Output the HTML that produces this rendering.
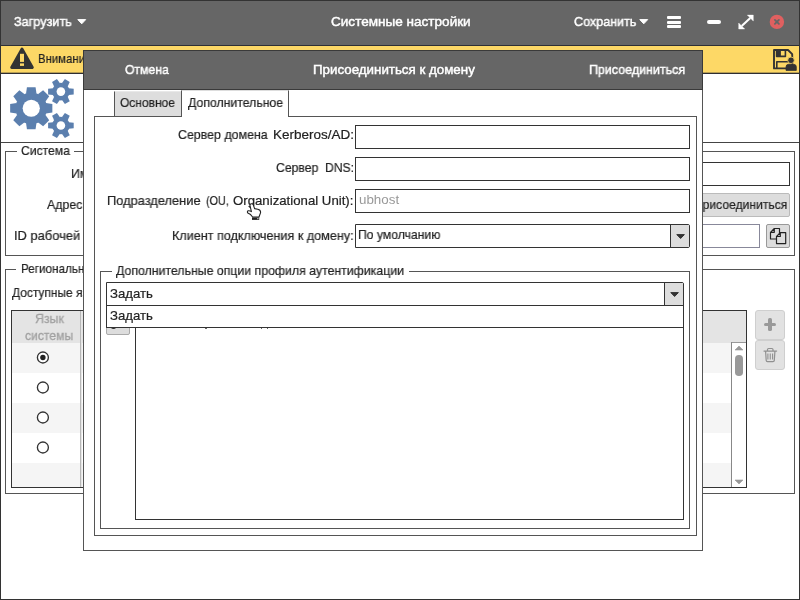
<!DOCTYPE html>
<html>
<head>
<meta charset="utf-8">
<title>Системные настройки</title>
<style>
*{box-sizing:border-box;margin:0;padding:0}
html,body{width:800px;height:600px;overflow:hidden;background:#fff}
body{font-family:"Liberation Sans",sans-serif;font-size:13px;color:#222;position:relative}
.a{position:absolute}
.t{position:absolute;white-space:nowrap;line-height:16px;height:16px;will-change:transform}
</style>
</head>
<body>
<div class="a" style="left:0px;top:0px;width:800px;height:600px;background:#fff;border:1px solid #333;"></div>
<div class="a" style="left:1px;top:1px;width:798px;height:44px;background:#666;"></div>
<div class="a" style="left:1px;top:45px;width:798px;height:1px;background:#2e3036;"></div>
<div class="t" style="left:14.00px;top:14px;font-size:13px;color:#fff;transform:scaleX(0.9737);transform-origin:0 0;-webkit-text-stroke:0.45px #fff;">Загрузить</div>
<svg class="a" style="left:77px;top:19.3px" width="9.5" height="5.5" viewBox="0 0 9.5 5.5"><path d="M0.8 0.6 L8.7 0.6 L4.75 4.8 Z" fill="#fff" stroke="#fff" stroke-width="1" stroke-linejoin="round"/></svg>
<div class="t" style="left:330.80px;top:14px;font-size:13px;color:#fff;transform:scaleX(1.0423);transform-origin:0 0;-webkit-text-stroke:0.45px #fff;">Системные настройки</div>
<div class="t" style="left:573.60px;top:14px;font-size:13px;color:#fff;transform:scaleX(0.9659);transform-origin:0 0;-webkit-text-stroke:0.45px #fff;">Сохранить</div>
<svg class="a" style="left:639.3px;top:19.3px" width="9.5" height="5.5" viewBox="0 0 9.5 5.5"><path d="M0.8 0.6 L8.7 0.6 L4.75 4.8 Z" fill="#fff" stroke="#fff" stroke-width="1" stroke-linejoin="round"/></svg>
<div class="a" style="left:667px;top:16px;width:14px;height:3px;background:#fff;border-radius:1px"></div>
<div class="a" style="left:667px;top:20.5px;width:14px;height:3px;background:#fff;border-radius:1px"></div>
<div class="a" style="left:667px;top:25px;width:14px;height:3px;background:#fff;border-radius:1px"></div>
<div class="a" style="left:707px;top:19.7px;width:13.6px;height:4.1px;background:#fff;border-radius:2px"></div>
<svg class="a" style="left:738px;top:14px" width="16" height="16" viewBox="738 14 16 16"><path d="M747.3 15.1 L753.3 15.1 L753.3 21.1 Z M738.7 23 L738.7 29 L744.7 29 Z" fill="#fff" stroke="#fff" stroke-width="0.4" stroke-linejoin="round"/><path d="M750.3 18.1 L741.7 26" stroke="#fff" stroke-width="2.1"/></svg>
<svg class="a" style="left:769px;top:14px" width="16" height="16" viewBox="769 14 16 16"><circle cx="776.9" cy="21.9" r="7.2" fill="#e06060"/><path d="M774.9 19.9 L778.9 23.9 M778.9 19.9 L774.9 23.9" stroke="#666" stroke-width="1.8" stroke-linecap="round"/></svg>
<div class="a" style="left:1px;top:46px;width:798px;height:27px;background:#fdd866;"></div>
<div class="a" style="left:1px;top:72px;width:798px;height:1px;background:#b89f54;"></div>
<div class="a" style="left:1px;top:73px;width:798px;height:1px;background:#2e2e32;"></div>
<svg class="a" style="left:8px;top:45px" width="28" height="26" viewBox="8 45 28 26"><path d="M22 49 L32.4 67.5 L11.6 67.5 Z" fill="#333" stroke="#333" stroke-width="2.8" stroke-linejoin="round"/><rect x="20" y="53.8" width="4" height="8.1" fill="#fdd866"/><rect x="20" y="63.4" width="4" height="2.5" fill="#fdd866"/></svg>
<div class="t" style="left:37.70px;top:51px;font-size:13px;color:#222;transform:scaleX(0.8760);transform-origin:0 0;-webkit-text-stroke:0.2px #222;">Внимание</div>
<svg class="a" style="left:771px;top:47px" width="28" height="25" viewBox="771 47 28 25"><path d="M774 50 L788 50 L792.2 54.2 L792.2 68.4 L774 68.4 Z" fill="none" stroke="#333" stroke-width="1.9" stroke-linejoin="round"/><path d="M776.6 50 L776.6 56.4 L785.4 56.4 L785.4 50" fill="none" stroke="#333" stroke-width="1.6" stroke-linejoin="round"/><rect x="776.6" y="50" width="4.3" height="6.4" fill="#333"/><path d="M776.8 68.4 L776.8 61.8 L790 61.8" fill="none" stroke="#333" stroke-width="1.6" stroke-linejoin="round"/><circle cx="791" cy="60.3" r="3.3" fill="#333" stroke="#fdd866" stroke-width="0.8"/><path d="M786 70.4 L786 67 Q786 64.3 788.6 64.3 L793.6 64.3 Q796.3 64.3 796.3 67 L796.3 70.4 Z" fill="#333" stroke="#333" stroke-width="0.8" stroke-linejoin="round"/></svg>
<svg class="a" style="left:5px;top:75px" width="75" height="66" viewBox="5 75 75 66"><g fill="#5b7fae"><circle cx="31.25" cy="108.25" r="15.8"/><path transform="rotate(0.0 31.25 108.25)" d="M26.00 93.65 L26.95 87.15 L35.55 87.15 L36.50 93.65 Z"/><path transform="rotate(45.0 31.25 108.25)" d="M26.00 93.65 L26.95 87.15 L35.55 87.15 L36.50 93.65 Z"/><path transform="rotate(90.0 31.25 108.25)" d="M26.00 93.65 L26.95 87.15 L35.55 87.15 L36.50 93.65 Z"/><path transform="rotate(135.0 31.25 108.25)" d="M26.00 93.65 L26.95 87.15 L35.55 87.15 L36.50 93.65 Z"/><path transform="rotate(180.0 31.25 108.25)" d="M26.00 93.65 L26.95 87.15 L35.55 87.15 L36.50 93.65 Z"/><path transform="rotate(225.0 31.25 108.25)" d="M26.00 93.65 L26.95 87.15 L35.55 87.15 L36.50 93.65 Z"/><path transform="rotate(270.0 31.25 108.25)" d="M26.00 93.65 L26.95 87.15 L35.55 87.15 L36.50 93.65 Z"/><path transform="rotate(315.0 31.25 108.25)" d="M26.00 93.65 L26.95 87.15 L35.55 87.15 L36.50 93.65 Z"/><circle cx="31.25" cy="108.25" r="8.6" fill="#fff"/><circle cx="60.9" cy="91.6" r="8.8"/><path transform="rotate(30.0 60.9 91.6)" d="M57.60 84.00 L58.10 78.80 L63.70 78.80 L64.20 84.00 Z"/><path transform="rotate(90.0 60.9 91.6)" d="M57.60 84.00 L58.10 78.80 L63.70 78.80 L64.20 84.00 Z"/><path transform="rotate(150.0 60.9 91.6)" d="M57.60 84.00 L58.10 78.80 L63.70 78.80 L64.20 84.00 Z"/><path transform="rotate(210.0 60.9 91.6)" d="M57.60 84.00 L58.10 78.80 L63.70 78.80 L64.20 84.00 Z"/><path transform="rotate(270.0 60.9 91.6)" d="M57.60 84.00 L58.10 78.80 L63.70 78.80 L64.20 84.00 Z"/><path transform="rotate(330.0 60.9 91.6)" d="M57.60 84.00 L58.10 78.80 L63.70 78.80 L64.20 84.00 Z"/><circle cx="60.9" cy="91.6" r="4.3" fill="#fff"/><circle cx="60.9" cy="125.5" r="8.8"/><path transform="rotate(30.0 60.9 125.5)" d="M57.60 117.90 L58.10 112.70 L63.70 112.70 L64.20 117.90 Z"/><path transform="rotate(90.0 60.9 125.5)" d="M57.60 117.90 L58.10 112.70 L63.70 112.70 L64.20 117.90 Z"/><path transform="rotate(150.0 60.9 125.5)" d="M57.60 117.90 L58.10 112.70 L63.70 112.70 L64.20 117.90 Z"/><path transform="rotate(210.0 60.9 125.5)" d="M57.60 117.90 L58.10 112.70 L63.70 112.70 L64.20 117.90 Z"/><path transform="rotate(270.0 60.9 125.5)" d="M57.60 117.90 L58.10 112.70 L63.70 112.70 L64.20 117.90 Z"/><path transform="rotate(330.0 60.9 125.5)" d="M57.60 117.90 L58.10 112.70 L63.70 112.70 L64.20 117.90 Z"/><circle cx="60.9" cy="125.5" r="4.3" fill="#fff"/></g></svg>
<div class="a" style="left:1px;top:142px;width:798px;height:1px;background:#444;"></div>
<div class="a" style="left:5px;top:151px;width:790px;height:105px;border:1px solid #555;"></div>
<div class="a" style="left:17px;top:150px;width:57px;height:3px;background:#fff"></div>
<div class="t" style="left:20.60px;top:143px;font-size:13px;color:#222;transform:scaleX(0.9321);transform-origin:0 0;-webkit-text-stroke:0.2px #222;">Система</div>
<div class="t" style="left:71.25px;top:166px;font-size:13px;color:#222;transform:scaleX(0.9500);transform-origin:0 0;-webkit-text-stroke:0.2px #222;">Имя</div>
<div class="t" style="left:46.90px;top:197px;font-size:13px;color:#222;transform:scaleX(0.9500);transform-origin:0 0;-webkit-text-stroke:0.2px #222;">Адрес:</div>
<div class="t" style="left:14.40px;top:228px;font-size:13px;color:#222;transform:scaleX(0.9921);transform-origin:0 0;-webkit-text-stroke:0.2px #222;">ID рабочей</div>
<div class="a" style="left:200px;top:162px;width:590px;height:24px;background:#fff;border:1px solid #333;"></div>
<div class="a" style="left:600px;top:193px;width:190px;height:24px;background:#ddd;border:1px solid #bbb;border-radius:2px;"></div>
<div class="t" style="left:693.80px;top:197px;font-size:13px;color:#222;transform:scaleX(0.9300);transform-origin:0 0;-webkit-text-stroke:0.2px #222;">Присоединиться</div>
<div class="a" style="left:200px;top:224px;width:560px;height:24px;background:#fff;border:1px solid #88889a;"></div>
<div class="a" style="left:766px;top:224px;width:24px;height:24px;background:#ddd;border:1px solid #999;border-radius:2px;"></div>
<svg class="a" style="left:768px;top:226px" width="20" height="20" viewBox="768 226 20 20"><path d="M770.5 232.3 L774.3 228.5 L779.5 228.5 L779.5 239 L770.5 239 Z M774.3 228.5 L774.3 232.3 L770.5 232.3" fill="#ddd" stroke="#222" stroke-width="1.2" stroke-linejoin="round"/><path d="M776.5 236.5 L780.3 232.7 L785.7 232.7 L785.7 243.6 L776.5 243.6 Z M780.3 232.7 L780.3 236.5 L776.5 236.5" fill="#ddd" stroke="#222" stroke-width="1.2" stroke-linejoin="round"/></svg>
<div class="a" style="left:5px;top:269px;width:790px;height:225px;border:1px solid #555;"></div>
<div class="a" style="left:16px;top:268px;width:170px;height:3px;background:#fff"></div>
<div class="t" style="left:20.60px;top:261px;font-size:13px;color:#222;transform:scaleX(0.9000);transform-origin:0 0;-webkit-text-stroke:0.2px #222;">Региональные настройки</div>
<div class="t" style="left:11.90px;top:285px;font-size:13px;color:#222;transform:scaleX(0.9187);transform-origin:0 0;-webkit-text-stroke:0.2px #222;">Доступные языки</div>
<div class="a" style="left:11px;top:310px;width:736px;height:178px;background:#fff;border:1px solid #333;"></div>
<div class="a" style="left:12px;top:311px;width:734px;height:32px;background:#e4e4e4;"></div>
<div class="a" style="left:12px;top:343px;width:719px;height:30px;background:#f5f5f5;"></div>
<div class="a" style="left:12px;top:403px;width:719px;height:30px;background:#f5f5f5;"></div>
<div class="a" style="left:12px;top:463px;width:719px;height:24px;background:#f5f5f5;"></div>
<div class="a" style="left:80px;top:311px;width:1px;height:176px;background:#b8b8b8;"></div>
<div class="a" style="left:81px;top:311px;width:1px;height:176px;background:#e6e6e6;"></div>
<div class="t" style="left:35.10px;top:311px;font-size:13px;color:#a0a0a0;transform:scaleX(0.9480);transform-origin:0 0;-webkit-text-stroke:0.3px #a0a0a0;">Язык</div>
<div class="t" style="left:25.40px;top:328px;font-size:13px;color:#a0a0a0;transform:scaleX(0.9344);transform-origin:0 0;-webkit-text-stroke:0.3px #a0a0a0;">системы</div>
<svg class="a" style="left:34px;top:348px" width="18" height="18" viewBox="34 348 18 18"><circle cx="42.9" cy="357.5" r="5.5" fill="#fff" stroke="#333" stroke-width="1.35"/><circle cx="42.9" cy="357.5" r="2.7" fill="#222"/></svg>
<svg class="a" style="left:34px;top:378px" width="18" height="18" viewBox="34 378 18 18"><circle cx="42.9" cy="387.5" r="5.5" fill="#fff" stroke="#333" stroke-width="1.35"/></svg>
<svg class="a" style="left:34px;top:408px" width="18" height="18" viewBox="34 408 18 18"><circle cx="42.9" cy="417.5" r="5.5" fill="#fff" stroke="#333" stroke-width="1.35"/></svg>
<svg class="a" style="left:34px;top:438px" width="18" height="18" viewBox="34 438 18 18"><circle cx="42.9" cy="447.5" r="5.5" fill="#fff" stroke="#333" stroke-width="1.35"/></svg>
<div class="a" style="left:731px;top:343px;width:15px;height:144px;background:#fff;"></div>
<div class="a" style="left:731px;top:342px;width:15px;height:1px;background:#999;"></div>
<div class="a" style="left:731px;top:342px;width:1px;height:145px;background:#888;"></div>
<svg class="a" style="left:734px;top:345px" width="10" height="6" viewBox="0 0 10 6"><path d="M1 5 L5 1 L9 5 Z" fill="#999" stroke="#999" stroke-width="0.6" stroke-linejoin="round"/></svg>
<div class="a" style="left:735.2px;top:355px;width:7.6px;height:21px;background:#999;border-radius:3.8px"></div>
<svg class="a" style="left:734px;top:479px" width="10" height="6" viewBox="0 0 10 6"><path d="M1 1 L5 5 L9 1 Z" fill="#999" stroke="#999" stroke-width="0.6" stroke-linejoin="round"/></svg>
<div class="a" style="left:755px;top:310px;width:30px;height:30px;background:#e2e2e2;border:1px solid #cfcfcf;border-radius:3px;"></div>
<div class="a" style="left:763.8px;top:322.5px;width:12.6px;height:3.8px;background:#999;border-radius:1.6px"></div>
<div class="a" style="left:768.2px;top:318.2px;width:3.8px;height:12.4px;background:#999;border-radius:1.6px"></div>
<div class="a" style="left:755px;top:340px;width:30px;height:30px;background:#e2e2e2;border:1px solid #cfcfcf;border-radius:3px;"></div>
<svg class="a" style="left:762px;top:346px" width="16" height="18" viewBox="762 346 16 18"><path d="M764 351.1 L776.6 351.1 M767.5 350.8 L767.5 349.6 Q767.5 348.5 768.6 348.5 L771.9 348.5 Q773 348.5 773 349.6 L773 350.8 M765.6 351.5 L766.2 360.4 Q766.3 361.6 767.5 361.6 L773 361.6 Q774.2 361.6 774.3 360.4 L774.9 351.5" fill="none" stroke="#909090" stroke-width="1.2" stroke-linecap="round" stroke-linejoin="round"/><path d="M767.9 353.6 L767.9 359.4 M770.25 353.6 L770.25 359.4 M772.6 353.6 L772.6 359.4" fill="none" stroke="#909090" stroke-width="1.1" stroke-linecap="butt"/></svg>
<div class="a" style="left:83px;top:50px;width:620px;height:501px;background:#fff;border:1px solid #555;"></div>
<div class="a" style="left:83px;top:50px;width:620px;height:40px;background:#666;border:1px solid #3a3a3a;"></div>
<div class="t" style="left:125.00px;top:62px;font-size:13px;color:#fff;transform:scaleX(0.9380);transform-origin:0 0;-webkit-text-stroke:0.45px #fff;">Отмена</div>
<div class="t" style="left:313.40px;top:62px;font-size:13px;color:#fff;transform:scaleX(1.0254);transform-origin:0 0;-webkit-text-stroke:0.45px #fff;">Присоединиться к домену</div>
<div class="t" style="left:589.00px;top:62px;font-size:13px;color:#fff;transform:scaleX(0.9580);transform-origin:0 0;-webkit-text-stroke:0.45px #fff;">Присоединиться</div>
<div class="a" style="left:94px;top:116px;width:603px;height:420px;background:#fff;border:1px solid #555;"></div>
<div class="a" style="left:114px;top:91px;width:68px;height:26px;background:#ddd;border:1px solid #555;border-top-color:#e8e8e8;"></div>
<div class="a" style="left:181px;top:90px;width:108px;height:27px;background:#fff;border:1px solid #555;border-top-color:#ddd;border-bottom:none;"></div>
<div class="a" style="left:182px;top:116px;width:106px;height:1px;background:#fff;"></div>
<div class="t" style="left:120.00px;top:95px;font-size:13px;color:#222;transform:scaleX(0.9233);transform-origin:0 0;-webkit-text-stroke:0.2px #222;">Основное</div>
<div class="t" style="left:187.90px;top:95px;font-size:13px;color:#222;transform:scaleX(0.9435);transform-origin:0 0;-webkit-text-stroke:0.2px #222;">Дополнительное</div>
<div class="t" style="left:178.30px;top:127px;font-size:13px;color:#222;transform:scaleX(0.9535);transform-origin:0 0;-webkit-text-stroke:0.2px #222;">Сервер домена</div>
<div class="t" style="left:272.60px;top:127px;font-size:13px;color:#222;transform:scaleX(1.0380);transform-origin:0 0;-webkit-text-stroke:0.2px #222;">Kerberos/AD:</div>
<div class="a" style="left:355px;top:125px;width:335px;height:24px;background:#fff;border:1px solid #333;"></div>
<div class="t" style="left:276.40px;top:160px;font-size:13px;color:#222;transform:scaleX(0.9408);transform-origin:0 0;-webkit-text-stroke:0.2px #222;">Сервер</div>
<div class="t" style="left:324.60px;top:160px;font-size:13px;color:#222;transform:scaleX(0.9337);transform-origin:0 0;-webkit-text-stroke:0.2px #222;">DNS:</div>
<div class="a" style="left:355px;top:157px;width:335px;height:24px;background:#fff;border:1px solid #333;"></div>
<div class="t" style="left:107.00px;top:193px;font-size:13px;color:#222;transform:scaleX(0.9880);transform-origin:0 0;-webkit-text-stroke:0.2px #222;">Подразделение</div>
<div class="t" style="left:205.60px;top:193px;font-size:13px;color:#222;transform:scaleX(0.8308);transform-origin:0 0;-webkit-text-stroke:0.2px #222;">(OU,</div>
<div class="t" style="left:233.20px;top:193px;font-size:13px;color:#222;transform:scaleX(1.0161);transform-origin:0 0;-webkit-text-stroke:0.2px #222;">Organizational Unit):</div>
<div class="a" style="left:355px;top:189px;width:335px;height:24px;background:#fff;border:1px solid #333;"></div>
<div class="t" style="left:359.20px;top:192px;font-size:13px;color:#999;transform:scaleX(1.0274);transform-origin:0 0;">ubhost</div>
<div class="t" style="left:172.00px;top:228px;font-size:13px;color:#222;transform:scaleX(0.9684);transform-origin:0 0;-webkit-text-stroke:0.2px #222;">Клиент подключения к домену:</div>
<div class="a" style="left:355px;top:224px;width:335px;height:24px;background:#fff;border:1px solid #333;border-radius:0 2px 2px 0;"></div>
<div class="a" style="left:670px;top:225px;width:19px;height:22px;background:#ddd;border-left:1px solid #333;"></div>
<svg class="a" style="left:676px;top:234px" width="9.200000000000045" height="5.199999999999989" viewBox="0 0 9.200000000000045 5.199999999999989"><path d="M0.8 0.6 L8.400000000000045 0.6 L4.600000000000023 4.4999999999999885 Z" fill="#333" stroke="#333" stroke-width="1" stroke-linejoin="round"/></svg>
<div class="t" style="left:358.30px;top:227px;font-size:13px;color:#222;transform:scaleX(0.9361);transform-origin:0 0;-webkit-text-stroke:0.2px #222;">По умолчанию</div>
<div class="a" style="left:100px;top:271px;width:590px;height:258px;border:1px solid #555;"></div>
<div class="a" style="left:112px;top:270px;width:297px;height:3px;background:#fff"></div>
<div class="t" style="left:115.50px;top:263px;font-size:13px;color:#222;transform:scaleX(0.9467);transform-origin:0 0;-webkit-text-stroke:0.2px #222;">Дополнительные опции профиля аутентификации</div>
<div class="a" style="left:106px;top:311px;width:24px;height:24px;background:#ddd;border:1px solid #aaa;border-radius:2px;"></div>
<div class="a" style="left:111px;top:326.5px;width:5px;height:2.5px;background:#333;border-radius:0 0 2px 2px"></div>
<div class="a" style="left:135px;top:316px;width:549px;height:204px;background:#fff;border:1px solid #333;"></div>
<div class="a" style="left:205px;top:328px;width:1.6px;height:1.3px;background:#666"></div>
<div class="a" style="left:260.6px;top:328px;width:1.6px;height:1.3px;background:#666"></div>
<div class="a" style="left:266.6px;top:328px;width:1.6px;height:1.3px;background:#666"></div>
<div class="a" style="left:106px;top:282px;width:578px;height:24px;background:#fff;border:1px solid #333;border-radius:0 2px 0 0;"></div>
<div class="a" style="left:664px;top:283px;width:19px;height:22px;background:#ddd;border-left:1px solid #333;"></div>
<svg class="a" style="left:670px;top:291.5px" width="9.200000000000045" height="5.199999999999989" viewBox="0 0 9.200000000000045 5.199999999999989"><path d="M0.8 0.6 L8.400000000000045 0.6 L4.600000000000023 4.4999999999999885 Z" fill="#333" stroke="#333" stroke-width="1" stroke-linejoin="round"/></svg>
<div class="t" style="left:110.10px;top:286px;font-size:13px;color:#222;transform:scaleX(1.0132);transform-origin:0 0;-webkit-text-stroke:0.2px #222;">Задать</div>
<div class="a" style="left:106px;top:305px;width:578px;height:23px;background:#fff;border:1px solid #333;"></div>
<div class="t" style="left:110.10px;top:308px;font-size:13px;color:#222;transform:scaleX(1.0132);transform-origin:0 0;-webkit-text-stroke:0.2px #222;">Задать</div>
<svg class="a" style="left:245px;top:201px" width="18" height="20" viewBox="245 201 18 20"><path d="M249.9 205.2 Q250.2 203.6 251.8 203.8 Q253 204 253.4 205.2 L254.6 208.6 L257.8 209.3 Q260.8 210 260.6 212.6 L259 217 L252.6 217 L250.6 214.6 L247.8 213 Q246.8 211.6 248.2 210.8 Q249.6 210.4 251.4 211.6 Z" fill="#fff" stroke="#222" stroke-width="1.1" stroke-linejoin="round"/><rect x="252" y="217.4" width="7.2" height="2.5" fill="#222"/><rect x="257.4" y="218" width="1" height="1.2" fill="#fff"/></svg>
</body>
</html>
